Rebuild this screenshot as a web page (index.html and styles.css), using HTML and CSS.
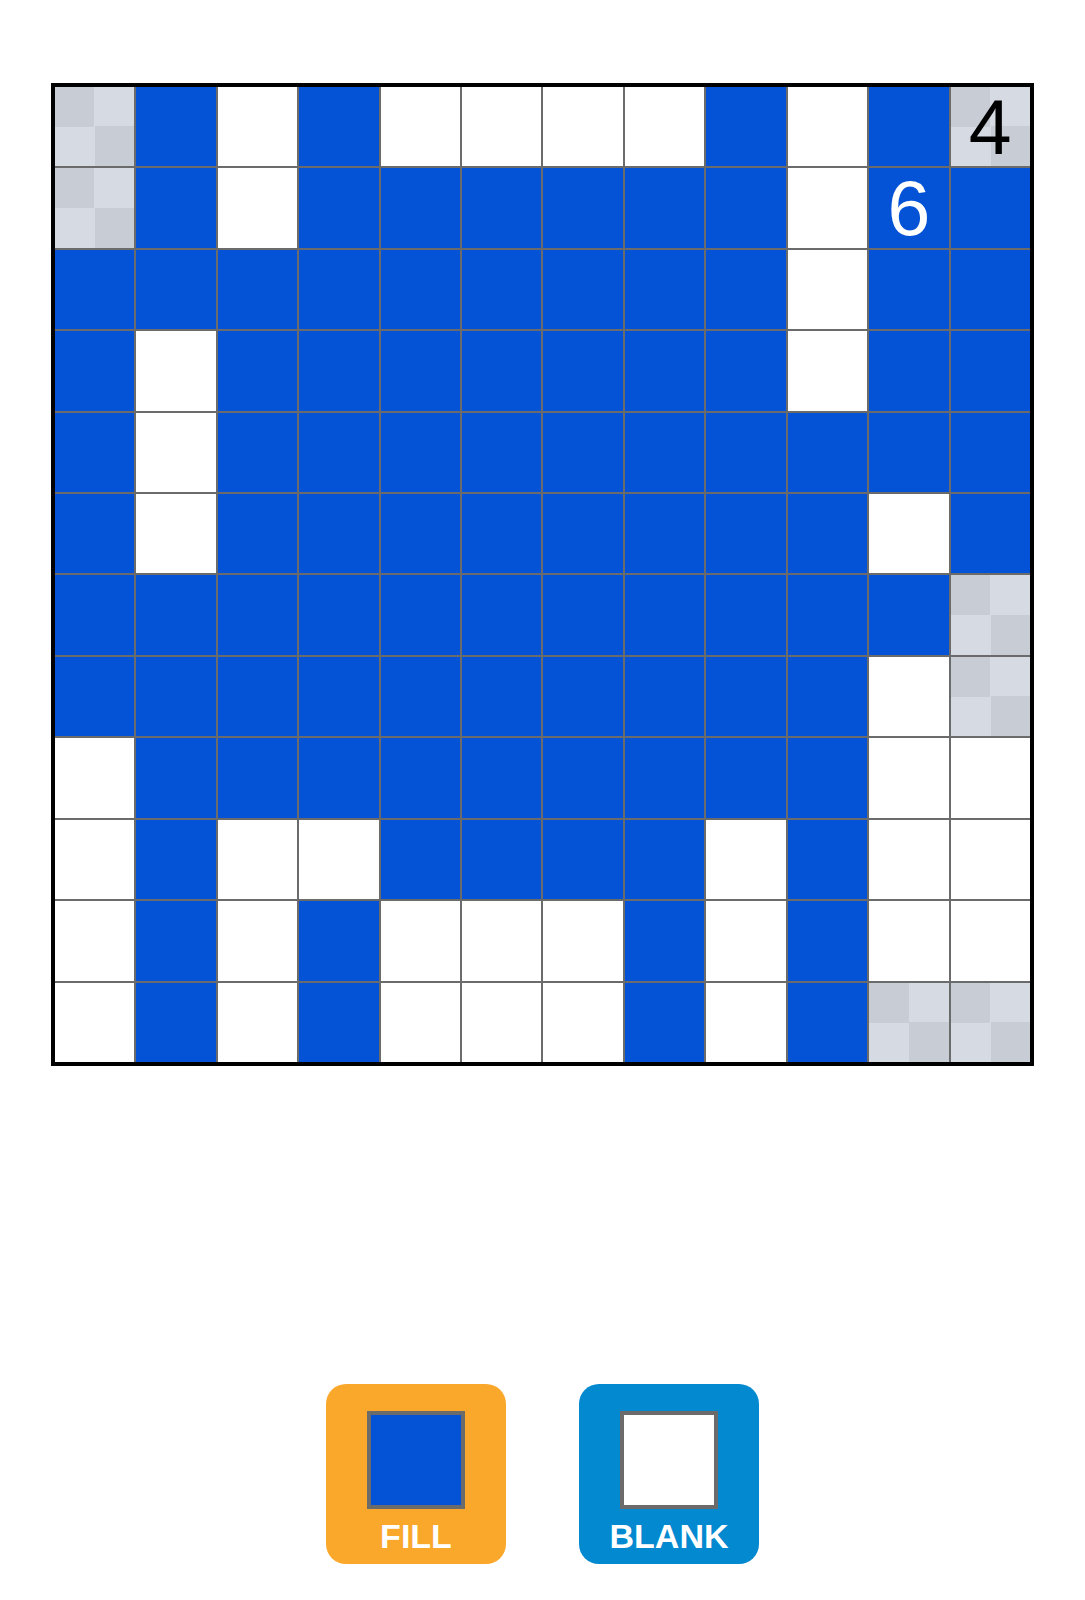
FILE: index.html
```html
<!DOCTYPE html>
<html>
<head>
<meta charset="utf-8">
<link rel="stylesheet" href="styles.css">
</head>
<body>
<div class="page">
  <div class="board">
    <div class="c g"></div><div class="c b"></div><div class="c w"></div><div class="c b"></div><div class="c w"></div><div class="c w"></div><div class="c w"></div><div class="c w"></div><div class="c b"></div><div class="c w"></div><div class="c b"></div><div class="c g"><span class="num dark">4</span></div>
    <div class="c g"></div><div class="c b"></div><div class="c w"></div><div class="c b"></div><div class="c b"></div><div class="c b"></div><div class="c b"></div><div class="c b"></div><div class="c b"></div><div class="c w"></div><div class="c b"><span class="num light">6</span></div><div class="c b"></div>
    <div class="c b"></div><div class="c b"></div><div class="c b"></div><div class="c b"></div><div class="c b"></div><div class="c b"></div><div class="c b"></div><div class="c b"></div><div class="c b"></div><div class="c w"></div><div class="c b"></div><div class="c b"></div>
    <div class="c b"></div><div class="c w"></div><div class="c b"></div><div class="c b"></div><div class="c b"></div><div class="c b"></div><div class="c b"></div><div class="c b"></div><div class="c b"></div><div class="c w"></div><div class="c b"></div><div class="c b"></div>
    <div class="c b"></div><div class="c w"></div><div class="c b"></div><div class="c b"></div><div class="c b"></div><div class="c b"></div><div class="c b"></div><div class="c b"></div><div class="c b"></div><div class="c b"></div><div class="c b"></div><div class="c b"></div>
    <div class="c b"></div><div class="c w"></div><div class="c b"></div><div class="c b"></div><div class="c b"></div><div class="c b"></div><div class="c b"></div><div class="c b"></div><div class="c b"></div><div class="c b"></div><div class="c w"></div><div class="c b"></div>
    <div class="c b"></div><div class="c b"></div><div class="c b"></div><div class="c b"></div><div class="c b"></div><div class="c b"></div><div class="c b"></div><div class="c b"></div><div class="c b"></div><div class="c b"></div><div class="c b"></div><div class="c g"></div>
    <div class="c b"></div><div class="c b"></div><div class="c b"></div><div class="c b"></div><div class="c b"></div><div class="c b"></div><div class="c b"></div><div class="c b"></div><div class="c b"></div><div class="c b"></div><div class="c w"></div><div class="c g"></div>
    <div class="c w"></div><div class="c b"></div><div class="c b"></div><div class="c b"></div><div class="c b"></div><div class="c b"></div><div class="c b"></div><div class="c b"></div><div class="c b"></div><div class="c b"></div><div class="c w"></div><div class="c w"></div>
    <div class="c w"></div><div class="c b"></div><div class="c w"></div><div class="c w"></div><div class="c b"></div><div class="c b"></div><div class="c b"></div><div class="c b"></div><div class="c w"></div><div class="c b"></div><div class="c w"></div><div class="c w"></div>
    <div class="c w"></div><div class="c b"></div><div class="c w"></div><div class="c b"></div><div class="c w"></div><div class="c w"></div><div class="c w"></div><div class="c b"></div><div class="c w"></div><div class="c b"></div><div class="c w"></div><div class="c w"></div>
    <div class="c w"></div><div class="c b"></div><div class="c w"></div><div class="c b"></div><div class="c w"></div><div class="c w"></div><div class="c w"></div><div class="c b"></div><div class="c w"></div><div class="c b"></div><div class="c g"></div><div class="c g"></div>
  </div>
  <div class="tools">
    <div class="tool fill">
      <div class="swatch swatch-fill"></div>
      <div class="label">FILL</div>
    </div>
    <div class="tool blank">
      <div class="swatch swatch-blank"></div>
      <div class="label">BLANK</div>
    </div>
  </div>
</div>
</body>
</html>
```

FILE: styles.css
```css
html, body {
  margin: 0;
  padding: 0;
  background: #ffffff;
}

.page {
  width: 1085px;
  height: 1600px;
  padding-top: 83px;
  box-sizing: border-box;
  display: flex;
  flex-direction: column;
  align-items: center;
  font-family: "Liberation Sans", Arial, sans-serif;
}

.board {
  width: 983px;
  height: 983px;
  box-sizing: border-box;
  border: 4px solid #000000;
  background: #6b6b6b;
  display: grid;
  grid-template-columns: repeat(12, 1fr);
  grid-template-rows: repeat(12, 1fr);
  gap: 2px;
}

.c {
  display: flex;
  align-items: center;
  justify-content: center;
  min-width: 0;
  min-height: 0;
}

.b { background: #0453d6; }
.w { background: #ffffff; }
.g {
  background: conic-gradient(#d6dae2 0 25%, #c8ccd4 0 50%, #d6dae2 0 75%, #c8ccd4 0);
}

.num {
  font-size: 77px;
  line-height: 70px;
  font-weight: 400;
}
.dark { color: #000000; }
.light { color: #ffffff; }

.tools {
  margin-top: 318px;
  display: flex;
  gap: 73px;
}

.tool {
  width: 180px;
  height: 180px;
  border-radius: 20px;
  display: flex;
  flex-direction: column;
  align-items: center;
  box-sizing: border-box;
  padding-top: 27px;
}

.fill { background: #f9a82c; }
.blank { background: #0389d0; }

.swatch {
  width: 98px;
  height: 98px;
  box-sizing: border-box;
  border: 4px solid #6b6b6b;
}
.swatch-fill { background: #0453d6; }
.swatch-blank { background: #ffffff; }

.label {
  margin-top: 7px;
  font-size: 34px;
  line-height: 40px;
  font-weight: 700;
  color: #ffffff;
}
```
